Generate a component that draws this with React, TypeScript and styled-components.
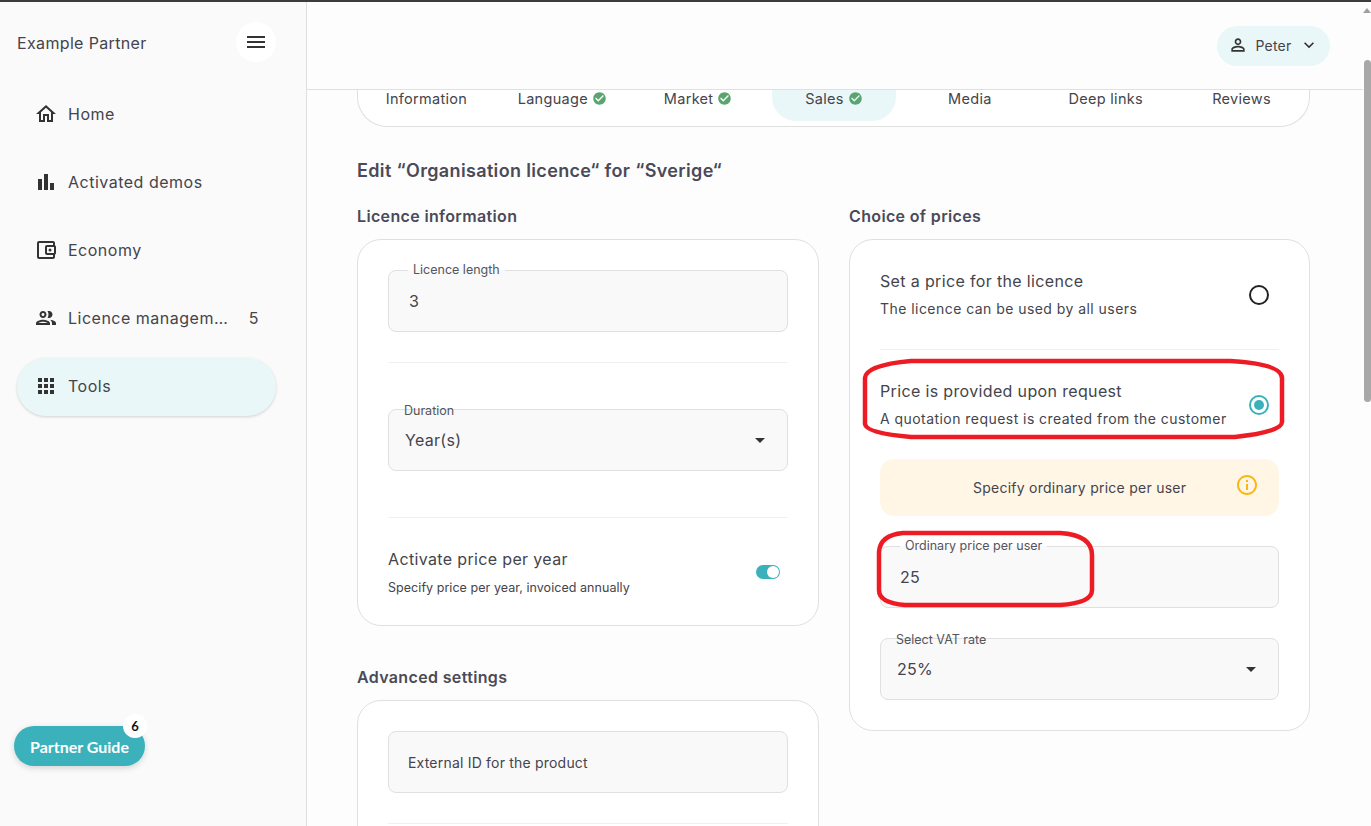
import type { ReactNode } from "react";
import styled, { createGlobalStyle } from "styled-components";
import {
  MdApps,
  MdArrowDropDown,
  MdBarChart,
  MdCheckCircle,
  MdInfoOutline,
  MdKeyboardArrowDown,
  MdMenu,
  MdOutlineAccountBalanceWallet,
  MdOutlineHome,
  MdOutlinePeople,
  MdPersonOutline,
} from "react-icons/md";

const GlobalStyle = createGlobalStyle`
  html, body {
    margin: 0;
    height: 100%;
    overflow: hidden;
  }
  body {
    font-family: Inter, "Noto Sans", sans-serif;
    color: #44444c;
    background: #fdfdfd;
  }
  * {
    box-sizing: border-box;
  }
`;

const Page = styled.div`
  position: relative;
  height: 826px;
  display: flex;
  border-top: 2px solid #3c3c3c;
`;

const Sidebar = styled.aside`
  position: relative;
  width: 307px;
  flex-shrink: 0;
  background: #fafafa;
  border-right: 1px solid #e0e0e0;
  padding: 20px 30px 0 17px;
`;

const Brand = styled.div`
  height: 40px;
  display: flex;
  align-items: center;
  justify-content: space-between;
  font-size: 16px;
  letter-spacing: 0.35px;
  span {
    padding-top: 2px;
  }
`;

const MenuButton = styled.div`
  width: 40px;
  height: 40px;
  border-radius: 50%;
  background: #fff;
  color: #333;
  display: flex;
  align-items: center;
  justify-content: center;
  font-size: 24px;
`;

const Nav = styled.nav`
  margin-top: 24px;
  display: flex;
  flex-direction: column;
  gap: 10px;
`;

const NavItem = styled.div<{ $active?: boolean }>`
  height: 58px;
  border-radius: 29px;
  padding: 0 17px 2px 17px;
  display: flex;
  align-items: center;
  gap: 10px;
  font-size: 16px;
  letter-spacing: 0.5px;
  background: ${(p) => (p.$active ? "#e9f7f8" : "transparent")};
  box-shadow: ${(p) => (p.$active ? "0 1px 3px rgba(0,0,0,.16)" : "none")};
  svg {
    font-size: 24px;
    color: #333;
    flex-shrink: 0;
  }
`;

const NavLabel = styled.span`
  flex: 1;
  min-width: 0;
  margin-right: 2px;
  white-space: nowrap;
  overflow: hidden;
  text-overflow: ellipsis;
`;

const GuideButton = styled.div`
  position: absolute;
  left: 14px;
  top: 724px;
  width: 131px;
  height: 40px;
  border-radius: 20px;
  background: #3bb1bc;
  color: #fff;
  font-family: Lato, sans-serif;
  font-size: 16px;
  font-weight: 700;
  display: flex;
  align-items: center;
  justify-content: center;
  box-shadow: 0 2px 6px rgba(0, 0, 0, 0.16);
`;

const GuideBadge = styled.span`
  position: absolute;
  right: -2px;
  top: -12px;
  width: 24px;
  height: 24px;
  border-radius: 50%;
  background: #fff;
  color: #111;
  font-size: 13px;
  font-weight: 700;
  display: flex;
  align-items: center;
  justify-content: center;
`;

const Main = styled.main`
  flex: 1;
  min-width: 0;
  display: flex;
  flex-direction: column;
  overflow: hidden;
`;

const Header = styled.header`
  height: 88px;
  flex-shrink: 0;
  border-bottom: 1px solid #e0e0e0;
  padding: 24px 33px 0 0;
  display: flex;
  justify-content: flex-end;
  align-items: flex-start;
`;

const UserPill = styled.div`
  width: 113px;
  height: 40px;
  border-radius: 20px;
  background: #e9f7f8;
  padding-bottom: 2px;
  display: flex;
  align-items: center;
  justify-content: center;
  gap: 8px;
  font-size: 14px;
  letter-spacing: 0.2px;
  svg {
    font-size: 20px;
    color: #333;
    flex-shrink: 0;
  }
`;

const Content = styled.div`
  padding: 0 53px 0 50px;
`;

const TabCard = styled.div`
  height: 37px;
  background: #fff;
  border: 1px solid #e0e0e0;
  border-top: none;
  border-radius: 0 0 30px 30px;
  display: grid;
  grid-template-columns: repeat(7, 1fr);
`;

const Tab = styled.div<{ $active?: boolean }>`
  height: 31px;
  margin: 0 5px 0 6px;
  padding-bottom: 14px;
  display: flex;
  align-items: center;
  justify-content: center;
  gap: 4px;
  font-size: 14.5px;
  letter-spacing: 0.3px;
  border-radius: 0 0 24px 24px;
  background: ${(p) => (p.$active ? "#e9f7f8" : "transparent")};
  svg {
    font-size: 15px;
    color: #5aa56f;
  }
`;

const PageTitle = styled.h1`
  margin: 32px 0 0;
  height: 24px;
  line-height: 24px;
  font-size: 18px;
  font-weight: 600;
  letter-spacing: 0.35px;
  color: #4a4a58;
`;

const Columns = styled.div`
  margin-top: 22px;
  display: grid;
  grid-template-columns: 462px 461px;
  gap: 30px;
  align-items: start;
`;

const Column = styled.div`
  display: flex;
  flex-direction: column;
`;

const SectionTitle = styled.h2<{ $top?: number }>`
  margin: ${(p) => p.$top ?? 0}px 0 12px;
  height: 22px;
  line-height: 22px;
  font-size: 16px;
  font-weight: 600;
  letter-spacing: 0.35px;
  color: #4a4a58;
`;

const Card = styled.section<{ $bottom?: number }>`
  background: #fff;
  border: 1px solid #e0e0e0;
  border-radius: 24px;
  padding: 30px 30px ${(p) => p.$bottom ?? 30}px;
  display: flex;
  flex-direction: column;
`;

const Field = styled.fieldset<{ $pad: number; $top?: number }>`
  margin: ${(p) => p.$top ?? -7}px 0 0;
  min-width: 0;
  height: 69px;
  border: 1px solid #e0e0e0;
  border-radius: 8px;
  background: #f9f9f9;
  padding: 0 ${(p) => p.$pad - 1}px;
  legend {
    margin-left: ${(p) => 20 - p.$pad}px;
    padding: 0 5px;
    font-size: 12.5px;
    line-height: 14px;
    color: #55555c;
  }
`;

const FieldRow = styled.div`
  height: 54px;
  display: flex;
  align-items: center;
  font-size: 16px;
  letter-spacing: 0.3px;
  padding-bottom: 7px;
`;

const SelectBox = styled.div<{ $top?: number }>`
  position: relative;
  height: 62px;
  margin-top: ${(p) => p.$top ?? 0}px;
  border: 1px solid #e0e0e0;
  border-radius: 8px;
  background: #f9f9f9;
  padding: 0 16px;
  display: flex;
  align-items: center;
  justify-content: space-between;
  font-size: 16px;
  letter-spacing: 0.3px;
  svg {
    font-size: 24px;
    color: #333;
    margin-right: -1px;
  }
`;

const SelectLabel = styled.span`
  position: absolute;
  left: 15px;
  top: -6px;
  font-size: 12.5px;
  line-height: 14px;
  letter-spacing: 0;
  color: #55555c;
`;

const PlainField = styled.div`
  height: 62px;
  border: 1px solid #e0e0e0;
  border-radius: 8px;
  background: #f9f9f9;
  padding: 0 19px;
  display: flex;
  align-items: center;
  font-size: 14px;
  letter-spacing: 0.2px;
`;

const Divider = styled.hr<{ $top: number; $bottom: number }>`
  width: 100%;
  border: none;
  border-top: 1px solid #f0f0f0;
  margin: ${(p) => p.$top}px 0 ${(p) => p.$bottom}px;
`;

const OptionRow = styled.div`
  display: flex;
  align-items: center;
  justify-content: space-between;
`;

const OptionTitle = styled.div`
  font-size: 16px;
  line-height: 22px;
  letter-spacing: 0.35px;
`;

const OptionText = styled.div`
  margin-top: 7px;
  font-size: 14px;
  line-height: 20px;
  letter-spacing: 0.45px;
`;

const OptionHint = styled.div`
  margin-top: 8px;
  font-size: 12.5px;
  line-height: 20px;
  letter-spacing: 0.05px;
`;

const Radio = styled.span<{ $on?: boolean }>`
  width: 20px;
  height: 20px;
  flex-shrink: 0;
  margin-right: 10px;
  border-radius: 50%;
  border: 2px solid ${(p) => (p.$on ? "#3bb1bc" : "#222")};
  display: flex;
  align-items: center;
  justify-content: center;
  &::after {
    content: "";
    width: 10px;
    height: 10px;
    border-radius: 50%;
    background: ${(p) => (p.$on ? "#3bb1bc" : "transparent")};
  }
`;

const Toggle = styled.span`
  width: 24px;
  height: 14px;
  flex-shrink: 0;
  margin: 0 8px 2px 0;
  border-radius: 7px;
  background: #3bb1bc;
  display: flex;
  align-items: center;
  justify-content: flex-end;
  padding-right: 1px;
  &::after {
    content: "";
    width: 12px;
    height: 12px;
    border-radius: 50%;
    background: #fff;
  }
`;

const Notice = styled.div`
  height: 57px;
  margin-top: 30px;
  border-radius: 14px;
  background: #fff6e5;
  padding: 0 20px 0 93px;
  display: flex;
  align-items: center;
  justify-content: space-between;
  font-size: 14px;
  letter-spacing: 0.25px;
  svg {
    font-size: 24px;
    color: #fbb616;
    margin-top: -6px;
  }
`;

const Annotation = styled.svg`
  position: absolute;
  left: 0;
  top: -2px;
  pointer-events: none;
`;

const Scrollbar = styled.div`
  width: 8px;
  flex-shrink: 0;
  background: #fdfdfd;
  display: flex;
  flex-direction: column;
  align-items: center;
`;

const ScrollArrow = styled.span`
  margin-top: 6px;
  width: 0;
  height: 0;
  border-left: 4px solid transparent;
  border-right: 4px solid transparent;
  border-bottom: 5px solid #a0a0a0;
`;

const ScrollThumb = styled.span`
  margin-top: 47px;
  width: 7px;
  height: 342px;
  border-radius: 4px;
  background: #a8a8a8;
`;

type NavEntry = { label: string; icon: ReactNode; count?: number; active?: boolean };

const navItems: NavEntry[] = [
  { label: "Home", icon: <MdOutlineHome /> },
  { label: "Activated demos", icon: <MdBarChart /> },
  { label: "Economy", icon: <MdOutlineAccountBalanceWallet /> },
  { label: "Licence management", icon: <MdOutlinePeople />, count: 5 },
  { label: "Tools", icon: <MdApps />, active: true },
];

const tabs = [
  { label: "Information" },
  { label: "Language", done: true },
  { label: "Market", done: true },
  { label: "Sales", done: true, active: true },
  { label: "Media" },
  { label: "Deep links" },
  { label: "Reviews" },
];

export default function App() {
  return (
    <>
      <GlobalStyle />
      <Page>
        <Sidebar>
          <Brand>
            <span>Example Partner</span>
            <MenuButton>
              <MdMenu />
            </MenuButton>
          </Brand>
          <Nav>
            {navItems.map((item) => (
              <NavItem key={item.label} $active={item.active}>
                {item.icon}
                <NavLabel>{item.label}</NavLabel>
                {item.count && <span>{item.count}</span>}
              </NavItem>
            ))}
          </Nav>
          <GuideButton>
            Partner Guide
            <GuideBadge>6</GuideBadge>
          </GuideButton>
        </Sidebar>
        <Main>
          <Header>
            <UserPill>
              <MdPersonOutline />
              Peter
              <MdKeyboardArrowDown />
            </UserPill>
          </Header>
          <Content>
            <TabCard>
              {tabs.map((tab) => (
                <Tab key={tab.label} $active={tab.active}>
                  {tab.label}
                  {tab.done && <MdCheckCircle />}
                </Tab>
              ))}
            </TabCard>
            <PageTitle>Edit “Organisation licence“ for “Sverige“</PageTitle>
            <Columns>
              <Column>
                <SectionTitle>Licence information</SectionTitle>
                <Card $bottom={27}>
                  <Field $pad={21}>
                    <legend>Licence length</legend>
                    <FieldRow>3</FieldRow>
                  </Field>
                  <Divider $top={30} $bottom={46} />
                  <SelectBox>
                    <SelectLabel>Duration</SelectLabel>
                    Year(s)
                    <MdArrowDropDown />
                  </SelectBox>
                  <Divider $top={46} $bottom={30} />
                  <OptionRow>
                    <div>
                      <OptionTitle>Activate price per year</OptionTitle>
                      <OptionHint>Specify price per year, invoiced annually</OptionHint>
                    </div>
                    <Toggle />
                  </OptionRow>
                </Card>
                <SectionTitle $top={40}>Advanced settings</SectionTitle>
                <Card>
                  <PlainField>External ID for the product</PlainField>
                  <Divider $top={30} $bottom={30} />
                </Card>
              </Column>
              <Column>
                <SectionTitle>Choice of prices</SectionTitle>
                <Card>
                  <OptionRow>
                    <div>
                      <OptionTitle>Set a price for the licence</OptionTitle>
                      <OptionText>The licence can be used by all users</OptionText>
                    </div>
                    <Radio />
                  </OptionRow>
                  <Divider $top={30} $bottom={30} />
                  <OptionRow>
                    <div>
                      <OptionTitle>Price is provided upon request</OptionTitle>
                      <OptionText>A quotation request is created from the customer</OptionText>
                    </div>
                    <Radio $on />
                  </OptionRow>
                  <Notice>
                    Specify ordinary price per user
                    <MdInfoOutline />
                  </Notice>
                  <Field $pad={20} $top={23}>
                    <legend>Ordinary price per user</legend>
                    <FieldRow>25</FieldRow>
                  </Field>
                  <SelectBox $top={30}>
                    <SelectLabel>Select VAT rate</SelectLabel>
                    25%
                    <MdArrowDropDown />
                  </SelectBox>
                </Card>
              </Column>
            </Columns>
          </Content>
        </Main>
        <Scrollbar>
          <ScrollArrow />
          <ScrollThumb />
        </Scrollbar>
        <Annotation width="1371" height="826" fill="none" stroke="#ed1c24" strokeWidth="4.5">
          <path d="M911 361 H1230 Q1282 364 1282 378 V422 Q1282 432 1235 437 H911 Q866 433 865 424 V378 Q866 365 911 361 Z" />
          <path d="M903 533 H1060 Q1092 535 1092 555 V590 Q1092 603 1060 605 H905 Q879 603 879 590 V552 Q880 535 903 533 Z" />
        </Annotation>
      </Page>
    </>
  );
}
